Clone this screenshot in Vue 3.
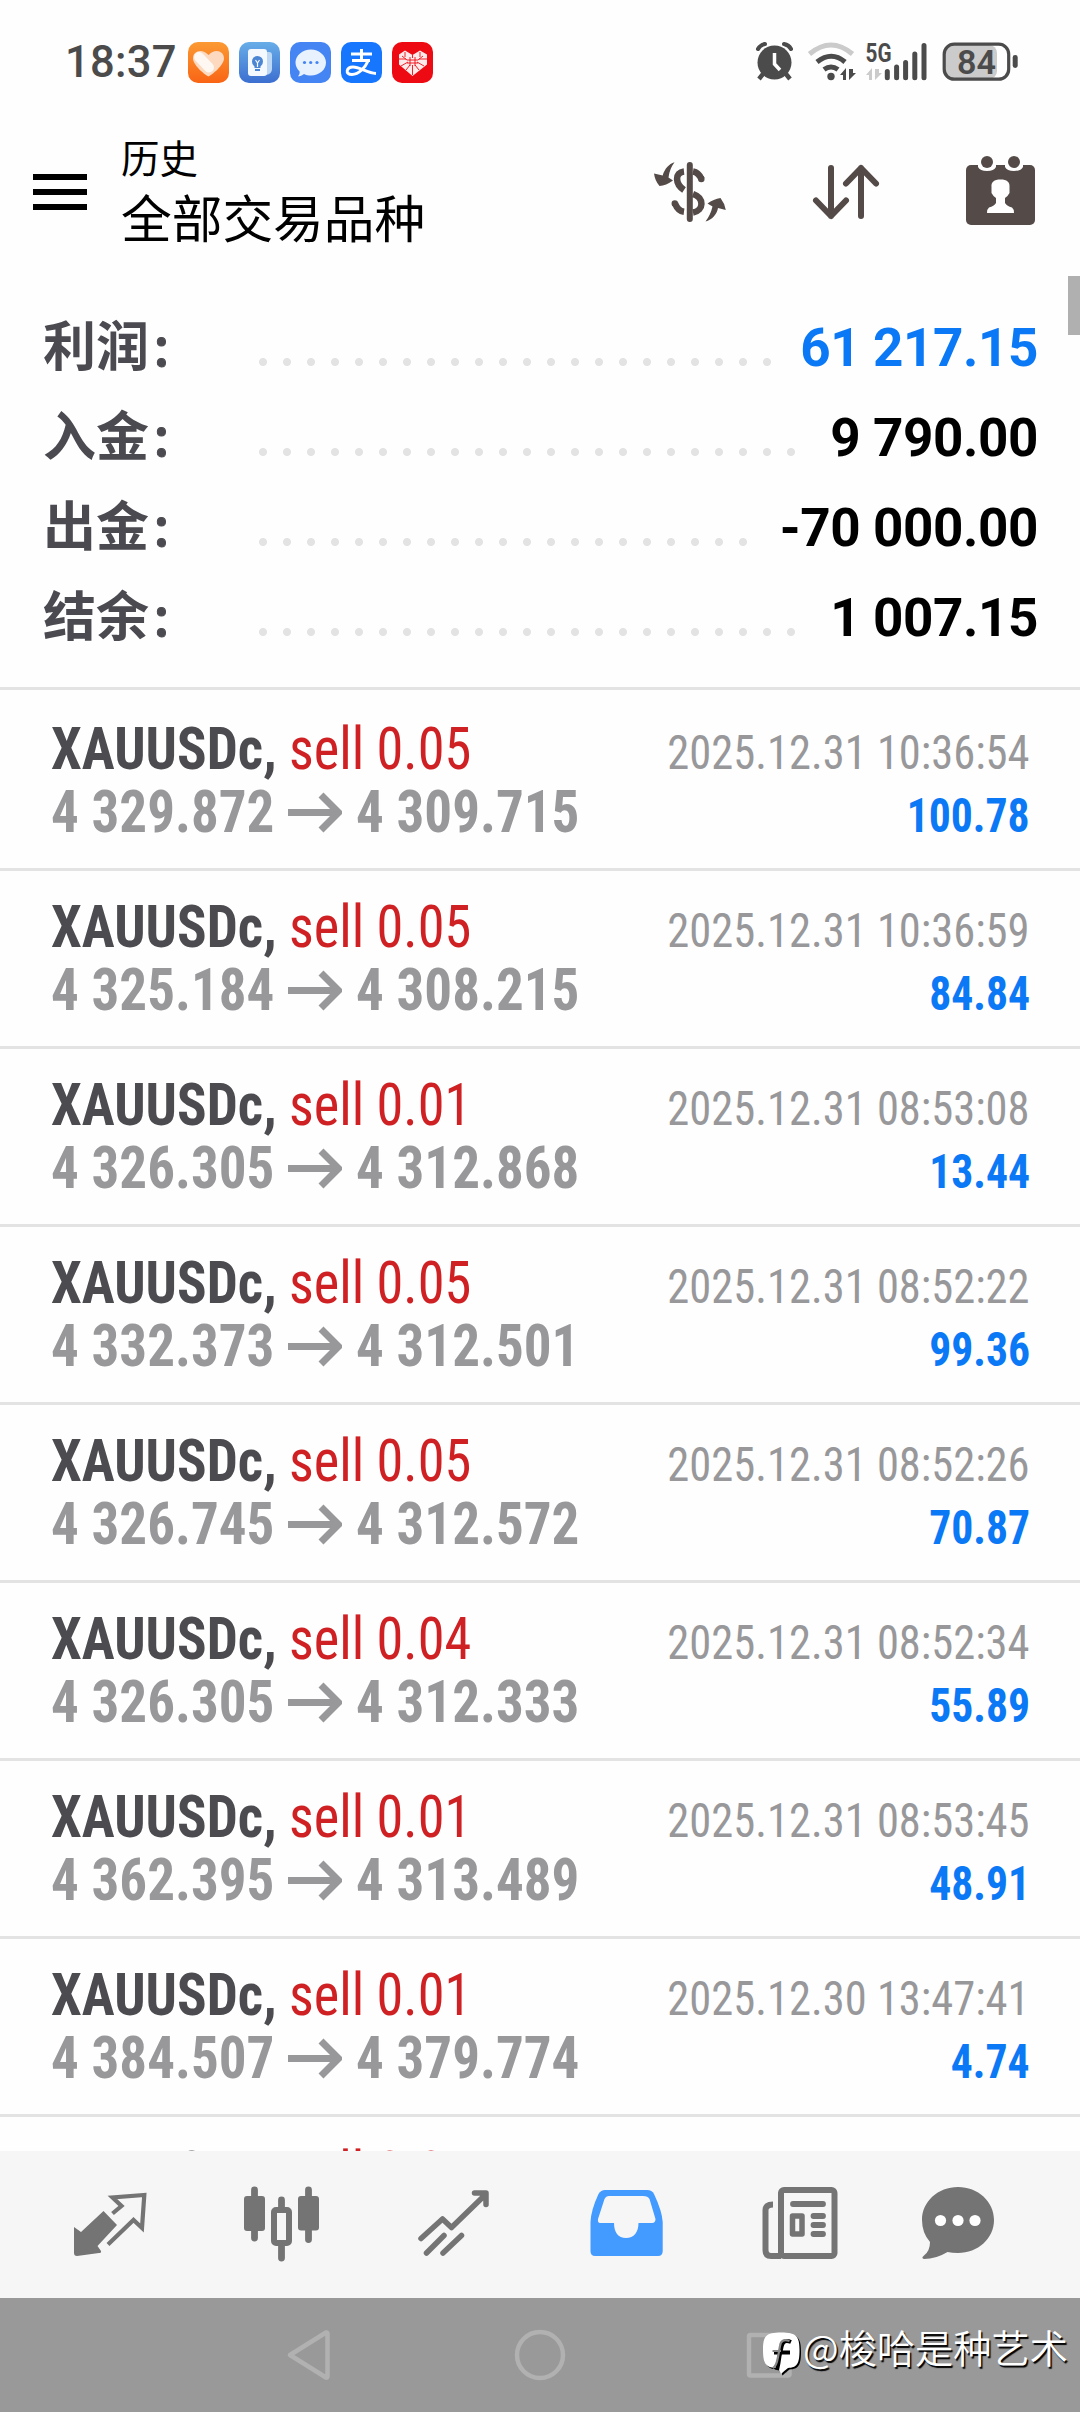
<script setup>
const summary = [
  { label: '利润', value: '61 217.15', dots: 22, blue: true },
  { label: '入金', value: '9 790.00', dots: 23 },
  { label: '出金', value: '-70 000.00', dots: 21 },
  { label: '结余', value: '1 007.15', dots: 23 },
]
const deals = [
  ['0.05', '4 329.872', '4 309.715', '2025.12.31 10:36:54', '100.78'],
  ['0.05', '4 325.184', '4 308.215', '2025.12.31 10:36:59', '84.84'],
  ['0.01', '4 326.305', '4 312.868', '2025.12.31 08:53:08', '13.44'],
  ['0.05', '4 332.373', '4 312.501', '2025.12.31 08:52:22', '99.36'],
  ['0.05', '4 326.745', '4 312.572', '2025.12.31 08:52:26', '70.87'],
  ['0.04', '4 326.305', '4 312.333', '2025.12.31 08:52:34', '55.89'],
  ['0.01', '4 362.395', '4 313.489', '2025.12.31 08:53:45', '48.91'],
  ['0.01', '4 384.507', '4 379.774', '2025.12.30 13:47:41', '4.74'],
  ['0.01', '', '', '', ''],
].map(([lot, open, close, time, profit]) => ({ lot, open, close, time, profit }))
</script>

<template>
  <div class="screen">
    <header class="status">
      <span class="clock">18:37</span>
      <div class="apps">
        <svg viewBox="0 0 41 41">
          <defs><linearGradient id="or" x1="0" y1="0" x2="0" y2="1"><stop offset="0" stop-color="#fb9a33" /><stop offset="1" stop-color="#f96414" /></linearGradient></defs>
          <rect width="41" height="41" rx="10" fill="url(#or)" />
          <path d="M20.500 34.500C17 33 5 23 5 16.500C5 9 14 6 20.500 13C27 6 36 9 36 16.500C36 23 24 33 20.500 34.500Z" fill="#fdd9bf" />
          <path d="M11 15L21 25.500" stroke="#fff" stroke-width="10" stroke-linecap="round" opacity=".8" />
        </svg>
        <svg viewBox="0 0 41 41">
          <defs><linearGradient id="bk" x1="0" y1="0" x2="0" y2="1"><stop offset="0" stop-color="#68ade8" /><stop offset="1" stop-color="#3c6fd0" /></linearGradient></defs>
          <rect width="41" height="41" rx="10" fill="url(#bk)" />
          <path d="M27 10h3q3 0 3 3v14q0 5-6 6z" fill="#bcd8f5" />
          <rect x="9" y="7" width="19" height="27" rx="3" fill="#f4f9ff" />
          <circle cx="18.500" cy="19.500" r="5.500" fill="#4b86d4" /><path d="M15.500 23h6v3h-6zM16 27h5v2h-5z" fill="#4b86d4" />
          <path d="M16.500 18l2 3 2-3M18.500 21v4" stroke="#f4f9ff" stroke-width="1.200" fill="none" />
        </svg>
        <svg viewBox="0 0 41 41">
          <rect width="41" height="41" rx="10" fill="#4484f3" />
          <path d="M21 7.500C29 7.500 36 13.500 36 20.500C36 28 29 33.500 21 33.500C18.500 33.500 16 33 14 32C12 33.500 10 34.300 8 34.300C9.500 32.500 9.800 31 9.600 29.400C7 27 5.500 24 5.500 20.500C5.500 13.500 12.500 7.500 21 7.500Z" fill="#e8f2fe" />
          <circle cx="14.500" cy="20.500" r="1.600" fill="#4484f3" /><circle cx="20.700" cy="20.500" r="1.600" fill="#4484f3" /><circle cx="27" cy="20.500" r="1.600" fill="#4484f3" />
        </svg>
        <svg viewBox="0 0 41 41">
          <rect width="41" height="41" rx="10" fill="#1676fe" />
          <path d="M10 12H31M20.500 7V18M11 18.500H29M27 19C24.500 25 18 32.500 11 32.500C3.500 32.500 5.500 25 12 25C19 25 26 31 35 31.500" fill="none" stroke="#fff" stroke-width="3" />
        </svg>
        <svg viewBox="0 0 41 41">
          <rect width="41" height="41" rx="10" fill="#ee0a12" />
          <path d="M20.500 34L7 22.500V12.500L13 8.500L20.500 13L28 8.500L35 12.500V22.500Z" fill="#fdeaea" />
          <path d="M20.500 13V16M20.500 23V33M7 17H14M27 17H35M9 24L16 20M32 24L25 20M13 10V15M28 10V15M14 28L18 23M27 28L23 23M10 14L15 18M31 14L26 18M15 18h11M15 21h11M18 15v9M23 15v9" stroke="#ee0a12" stroke-width=".9" fill="none" />
        </svg>
      </div>
      <svg class="sys" viewBox="750 38 280 48">
        <g fill="#4b4b4b" stroke="#4b4b4b">
          <circle cx="774.500" cy="62.500" r="17" stroke="none" />
          <path d="M758 49q2-4 7-5M791 49q-2-4-7-5" fill="none" stroke-width="4" stroke-linecap="round" />
          <path d="M763 74l-4 5M786 74l4 5" stroke-width="4.500" />
          <path d="M774.500 53v11l5.500 6" fill="none" stroke="#fff" stroke-width="3.500" />
        </g>
        <g fill="none" stroke="#4b4b4b" stroke-width="5">
          <path d="M809.500 54q21.500-18 43 0" stroke="#cbcbcb" />
          <path d="M817 62q14.500-11.500 28 0M824 69.500q7-5 14 0" />
        </g>
        <circle cx="831" cy="76.500" r="3.700" fill="#4b4b4b" />
        <path d="M846 80V68l-6 7h3v5zM849 69v11l7-7h-3v-4z" fill="#4b4b4b" />
        <path d="M872 80V68l-6 7h3v5zM875 69v11l7-7h-3v-4z" fill="#cbcbcb" />
        <text x="865.500" y="61.500" textLength="26" lengthAdjust="spacingAndGlyphs" font-size="26" font-weight="700" fill="#4b4b4b">5G</text>
        <path d="M887.300 71.500V77.800M896.600 67V77.800M905.600 62.500V77.800M914.800 54V77.800M924 45.500V77.800" stroke="#4b4b4b" stroke-width="5" stroke-linecap="round" />
        <rect x="945" y="45" width="52" height="34" rx="8" fill="#cbcbcb" />
        <rect x="944.200" y="44.200" width="64.500" height="35" rx="10" fill="none" stroke="#4b4b4b" stroke-width="3.200" />
        <rect x="1012.700" y="55" width="5" height="13" rx="2.400" fill="#4b4b4b" />
        <text x="957" y="73.500" textLength="39" lengthAdjust="spacingAndGlyphs" font-size="34" font-weight="600" fill="#4b4b4b">84</text>
      </svg>
    </header>

    <div class="toolbar">
      <div class="burger"><i></i><i></i><i></i></div>
      <div class="titles">
        <div class="sub">历史</div>
        <div class="main">全部交易品种</div>
      </div>
      <svg class="tools" viewBox="640 140 410 100">
        <g fill="none" stroke="#544a48" stroke-linecap="round">
          <path d="M689.800 165V219" stroke-width="6" />
          <path d="M684 171.500C674.500 172.500 675 184 684 190M675 203.500Q678 211 684 211.800M693 171.500Q698.500 172.500 701.500 179M693 194C704.500 198 704 210.500 693 212.500" stroke-width="6.500" stroke-linecap="butt" />
          <path d="M674.800 203.500v.1M701.300 178.800v.1" stroke-width="6.500" />
        </g>
        <path d="M674.500 162.300C669 164 664.500 169 662.700 175.500L654 173.500Q655 181 659.500 186Q666 185.500 673 180.500L668.500 177.500Q669.500 169 674.500 162.300ZM705.500 221.500C712 220 717 214 718 208L725.800 210Q724.500 203 720.500 198Q713.500 199 707.500 203.500L712.500 206.500Q710.500 215 705.500 221.500Z" fill="#544a48" />
        <path d="M831 168V216M816 200.500L831 216L846 200.500M861 216V168M846 183.500L861 168L876 183.500" fill="none" stroke="#544a48" stroke-width="6" stroke-linecap="round" stroke-linejoin="round" />
        <rect x="966" y="165" width="69" height="60" rx="5" fill="#544a48" />
        <path d="M978 164v3q2 4 9 4t9-4v-3zM1005 164v3q2 4 9 4t9-4v-3z" fill="#fff" />
        <circle cx="987" cy="162" r="6" fill="#544a48" /><circle cx="1014" cy="162" r="6" fill="#544a48" />
        <path d="M1000.500 179.500C1007 179.500 1010 182 1009.500 187V193Q1008 196 1005 198V203Q1007 206 1012 207.500Q1014 209 1014 213H987Q987 209 989 207.500Q994 206 996 203V198Q993 196 991.500 193V187C991 182 994 179.500 1000.500 179.500Z" fill="#fff" />
      </svg>
    </div>

    <section class="summary">
      <div v-for="s in summary" :key="s.label" class="sum">
        <span class="label">{{ s.label }}<b>:</b></span>
        <span class="dots" :style="{ width: s.dots * 24 + 'px' }"></span>
        <span class="value" :class="{ blue: s.blue }">{{ s.value }}</span>
      </div>
      <div class="thumb"></div>
    </section>

    <section class="deals">
      <article v-for="(d, i) in deals" :key="i" class="deal">
        <div class="line">
          <span class="symbol"><span>XAUUSDc,</span></span>
          <span class="side"><span>sell {{ d.lot }}</span></span>
          <span class="time"><span>{{ d.time }}</span></span>
        </div>
        <div v-if="d.open" class="line second">
          <span class="price"><span>{{ d.open }}</span></span>
          <svg class="arrow" viewBox="0 0 54 42"><path d="M0 20.500H50M33 3L50.500 20.500L33 38" fill="none" stroke="#98989b" stroke-width="7" /></svg>
          <span class="price"><span>{{ d.close }}</span></span>
          <span class="profit"><span>{{ d.profit }}</span></span>
        </div>
      </article>
    </section>

    <nav class="tabs">
      <svg viewBox="24 2151 172 147">
        <path d="M103.500 2211L117 2225L97.500 2246L101 2251Q101.500 2253 99 2253L77 2256Q74 2256 74 2253V2227L81 2232Z" fill="#747474" />
        <path d="M112.500 2213.500L121.500 2206L112.500 2197.500L144.300 2195L142 2228L133.500 2220L108 2244.500" fill="none" stroke="#747474" stroke-width="4.200" />
      </svg>
      <svg viewBox="196 2151 172 147">
        <path d="M254.500 2190V2238M308.500 2190V2239.500M281.500 2200V2210M281.500 2243V2258" stroke="#747474" stroke-width="6.800" stroke-linecap="round" />
        <rect x="244" y="2196" width="21" height="35" rx="3" fill="#747474" /><rect x="298" y="2196" width="21" height="34.500" rx="3" fill="#747474" />
        <rect x="274" y="2210" width="15" height="33" rx="2" fill="#f6f6f6" stroke="#747474" stroke-width="6" />
      </svg>
      <svg viewBox="368 2151 172 147">
        <g fill="none" stroke="#747474" stroke-width="5.500" stroke-linecap="round" stroke-linejoin="round">
          <path d="M421 2238.500L442.500 2219L451.500 2227.500L485 2195M474.500 2193H486V2204.500M426.500 2253L444 2235.500M443 2253L461.500 2235.500" />
        </g>
      </svg>
      <svg viewBox="540 2151 172 147">
        <path d="M605 2190H647Q652 2190 654 2194Q662 2211 662.700 2222V2251Q662.700 2256 658 2256H595Q590.500 2256 590.500 2251V2222Q591 2210 598.500 2194Q601 2190 605 2190Z" fill="#439aff" />
        <path d="M609 2196H643Q648 2196 649.500 2199L655.500 2219Q655.500 2223 652 2223H638.500C638.500 2232 634 2238 626 2238C618 2238 614 2232 614 2223H600Q597.500 2223 598 2219L604.500 2199Q606 2196 609 2196Z" fill="#f6f6f6" />
      </svg>
      <svg viewBox="712 2151 172 147">
        <g fill="none" stroke="#747474" stroke-width="6">
          <rect x="781" y="2190" width="53.500" height="66" rx="3" />
          <path d="M773 2204.500Q765.500 2204.500 765.500 2210V2250Q765.500 2256 771 2256H781" />
          <path d="M793 2204H823M813.500 2216H823M813.500 2225H823M813.500 2234H823" stroke-linecap="round" stroke-width="5.800" />
          <rect x="792.500" y="2216" width="9.500" height="18" stroke-linejoin="round" stroke-width="5.500" />
        </g>
      </svg>
      <svg viewBox="884 2151 172 147">
        <path d="M958 2187C978 2187 994 2201.500 994 2220C994 2238.500 978 2253 958 2253Q952 2253 947.500 2252Q936 2259 924 2259Q921 2258 923.500 2256Q930 2251.500 930 2242Q922 2233 922 2220C922 2201.500 938 2187 958 2187Z" fill="#747474" />
        <circle cx="940.500" cy="2220.500" r="5.600" fill="#fff" /><circle cx="958" cy="2220.500" r="5.600" fill="#fff" /><circle cx="975" cy="2220.500" r="5.600" fill="#fff" />
      </svg>
    </nav>

    <footer class="keys">
      <svg viewBox="0 2298 1080 114">
        <g fill="none" stroke="#b1b1b1" stroke-width="4.500" stroke-linejoin="round">
          <path d="M290 2355L326 2332.500Q327.500 2332 327.500 2334V2376Q327.500 2378 326 2377.500Z" />
          <circle cx="540" cy="2355" r="23" />
          <rect x="749" y="2335" width="40.500" height="40.500" rx="1.500" />
        </g>
        <path transform="translate(1.500 1.500)" d="M781 2332.500C796 2332.500 799.500 2336 799.500 2350C799.500 2364 797 2367.500 788 2368Q784 2371 781 2374Q780 2371 778 2368C766 2368 763 2364 763 2350C763 2336 766 2332.500 781 2332.500Z" fill="#000" />
        <path d="M781 2332.500C796 2332.500 799.500 2336 799.500 2350C799.500 2364 797 2367.500 788 2368Q784 2371 781 2374Q780 2371 778 2368C766 2368 763 2364 763 2350C763 2336 766 2332.500 781 2332.500Z" fill="#fff" />
        <path d="M791 2342Q783 2338.500 781.500 2347L779.500 2356Q778.500 2364 777 2370M774 2352.500H790" fill="none" stroke="#000" stroke-width="4" />
        <path d="M789.500 2341Q781 2338 780 2346L778 2357Q776.500 2366 773 2368M772.500 2351H781" fill="none" stroke="#888" stroke-width="2.200" />
      </svg>
      <span class="mark">@梭哈是种艺术</span>
    </footer>
  </div>
</template>

<style>
body { margin: 0; background: #fff; }
</style>

<style scoped>
.screen { width: 1080px; height: 2412px; overflow: hidden; display: flex; flex-direction: column; background: #fefefe; font-family: Roboto, "Noto Sans CJK SC", sans-serif; }
svg { display: block; flex: none; }
.status { height: 124px; display: flex; align-items: flex-start; box-sizing: border-box; padding: 38px 50px 0 65px; flex: none; }
.clock { width: 123px; height: 48px; line-height: 50px; font-size: 43.500px; font-weight: 500; letter-spacing: .3px; color: #4b4b4b; }
.apps { display: flex; gap: 10px; padding-top: 4px; }
.apps svg { width: 41px; height: 41px; }
.sys { width: 280px; height: 48px; margin-left: auto; }
.toolbar { height: 140px; flex: none; display: flex; align-items: flex-start; padding: 0 30px 0 33px; }
.burger { width: 54px; padding-top: 50px; display: flex; flex-direction: column; gap: 9px; }
.burger i { height: 6px; background: #000; }
.titles { padding: 4px 0 0 34px; font-family: "Noto Sans CJK SC", sans-serif; color: #000; }
.sub { font-size: 38.500px; line-height: 56px; }
.main { font-size: 50.700px; line-height: 64px; }
.tools { width: 410px; height: 100px; margin: 16px 0 0 auto; }
.summary { position: relative; height: 426px; flex: none; box-sizing: border-box; border-bottom: 3px solid #e3e3e3; padding: 37px 42px 0; }
.sum { height: 90px; display: flex; align-items: center; }
.label { width: 216px; margin-left: 1px; font-family: "Noto Sans CJK SC", sans-serif; font-weight: 700; font-size: 53px; line-height: 90px; color: #4b4a50; margin-top: -6px; }
.label b { margin-left: 4.500px; font-weight: 500; -webkit-text-stroke: 1px #4b4a50; }
.dots { height: 8px; margin-top: 31px; background: radial-gradient(circle at 4px 4px, #e3e3e3 3.600px, transparent 4.400px) 0 0 / 24px 8px repeat-x; }
.value { margin-left: auto; font-weight: 700; font-size: 53px; letter-spacing: -.4px; line-height: 90px; color: #000; padding-top: 4px; }
.value.blue { color: #0b79f5; }
.thumb { position: absolute; right: 0; top: 12px; width: 12px; height: 59px; background: #b0b0b0; }
.deals { height: 1461px; flex: none; box-sizing: border-box; padding-top: 3px; overflow: hidden; font-stretch: 75%; }
.deal { height: 178px; box-sizing: border-box; border-bottom: 3px solid #e3e3e3; padding: 25px 50px 0 51px; }
.line { display: flex; height: 63px; align-items: baseline; line-height: 63px; font-size: 59.500px; white-space: nowrap; }
.line > span > span { display: inline-block; transform-origin: 0 50%; }
.symbol { width: 238px; color: #4b4b50; font-weight: 700; }
.symbol > span { transform: scaleX(.925); }
.side { width: 200px; color: #cf2124; }
.side > span { transform: scaleX(.912); }
.time, .profit { margin-left: auto; font-size: 48.500px; }
.time { color: #98989b; }
.line > .time > span { transform-origin: 100% 50%; transform: scaleX(.918); }
.line > .profit > span { transform-origin: 100% 50%; transform: scaleX(.9); }
.second { color: #98989b; font-weight: 700; }
.price { width: 237px; }
.price > span { transform: scaleX(.925); }
.arrow { width: 54px; height: 42px; margin-right: 14px; align-self: center; }
.profit { color: #0b79f5; }
.tabs { height: 147px; flex: none; background: #f6f6f6; display: flex; padding: 0 24px; }
.tabs svg { width: 172px; height: 147px; }
.keys { position: relative; height: 114px; flex: none; background: #999; }
.keys svg { width: 1080px; height: 114px; }
.mark { position: absolute; left: 803px; top: 22px; line-height: 54px; font-family: "Noto Sans CJK SC", sans-serif; font-weight: 350; font-size: 38.200px; color: #fff; text-shadow: 1.500px 1.500px 1px #000; white-space: nowrap; }
</style>
